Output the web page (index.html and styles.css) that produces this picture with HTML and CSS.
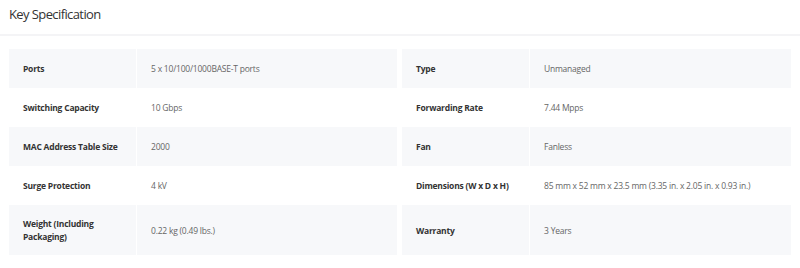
FILE: index.html
```html
<!DOCTYPE html>
<html>
<head>
<meta charset="utf-8">
<link rel="stylesheet" href="styles.css">
</head>
<body>
<div class="head"><h2 class="title">Key Specification</h2></div>
<div class="specs">
  <div class="table">
    <div class="row shade"><div class="lab">Ports</div><div class="val">5 x 10/100/1000BASE-T ports</div></div>
    <div class="row"><div class="lab">Switching Capacity</div><div class="val">10 Gbps</div></div>
    <div class="row shade"><div class="lab">MAC Address Table Size</div><div class="val">2000</div></div>
    <div class="row"><div class="lab">Surge Protection</div><div class="val">4 kV</div></div>
    <div class="row shade tall"><div class="lab">Weight (Including Packaging)</div><div class="val">0.22 kg (0.49 lbs.)</div></div>
  </div>
  <div class="table">
    <div class="row shade"><div class="lab">Type</div><div class="val">Unmanaged</div></div>
    <div class="row"><div class="lab">Forwarding Rate</div><div class="val">7.44 Mpps</div></div>
    <div class="row shade"><div class="lab">Fan</div><div class="val">Fanless</div></div>
    <div class="row"><div class="lab">Dimensions (W x D x H)</div><div class="val">85 mm x 52 mm x 23.5 mm (3.35 in. x 2.05 in. x 0.93 in.)</div></div>
    <div class="row shade tall"><div class="lab">Warranty</div><div class="val">3 Years</div></div>
  </div>
</div>
</body>
</html>
```
FILE: styles.css
```css
* { box-sizing: border-box; }
body {
  margin: 0;
  background: #fff;
  font-family: "Open Sans", "Noto Sans", sans-serif;
  color: #333;
}
.head {
  height: 36px;
  border-bottom: 2px solid #f4f4f6;
  padding: 4px 9px 0;
}
.title {
  margin: 0;
  font-size: 13px;
  letter-spacing: -0.6px;
  font-weight: 400;
  line-height: 20px;
  color: #333;
}
.specs {
  display: grid;
  grid-template-columns: 388px 389px;
  column-gap: 5px;
  padding: 13px 9px 0;
}
.row {
  display: grid;
  grid-template-columns: 127px 1fr;
  column-gap: 1px;
  height: 39px;
}
.row.tall { height: 50px; }
.row.shade .lab, .row.shade .val { background: #f7f8fa; }
.lab, .val {
  display: flex;
  align-items: center;
  padding: 0 14px;
  line-height: 13px;
  font-size: 8.5px;
  letter-spacing: -0.22px;
}
.lab {
  font-weight: 700;
  color: #333;
  padding-right: 4px;
}
.val {
  color: #666;
}
```
